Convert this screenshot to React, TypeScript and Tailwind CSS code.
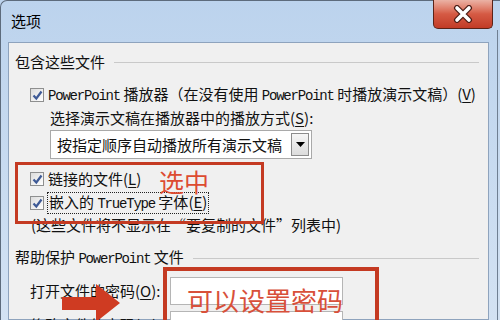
import React from 'react';

const CJK = "font-['Noto_Sans_CJK_SC','Noto_Sans_CJK_JP',sans-serif]";

const Mono: React.FC<{ children: React.ReactNode }> = ({ children }) => (
  <span className="font-['Liberation_Mono',monospace] text-[14px] tracking-[-1.2px]">{children}</span>
);

const Key: React.FC<{ k: string }> = ({ k }) => (
  <span>
    (<span className="underline underline-offset-2">{k}</span>)
  </span>
);

const CheckBox: React.FC = () => (
  <span className="flex h-[14px] w-[14px] shrink-0 items-center justify-center border border-[#8e8f8f] bg-gradient-to-br from-[#dcdcdc] to-white">
    <svg width="11" height="11" viewBox="0 0 11 11">
      <path d="M1.5 5.5 L4.3 8.5 L9.5 1.5" fill="none" stroke="#3e5a96" strokeWidth="2.2" />
    </svg>
  </span>
);

const GroupTitle: React.FC<{ children: React.ReactNode }> = ({ children }) => (
  <div className="flex h-[20px] items-center pl-[6px] pr-[9px]">
    <span className="whitespace-nowrap text-[15px] leading-[20px]">{children}</span>
    <div className="ml-[9px] flex-1 border-t border-[#c9c9c9] border-b-white" />
  </div>
);

export default function App() {
  return (
    <div className={`relative h-[320px] w-[500px] overflow-hidden bg-gradient-to-b from-[#bcd3ed] to-[#d3e2f3] text-[#111] ${CJK}`}>
      {/* window outline */}
      <div className="absolute inset-0 rounded-tl-[7px] border-l border-t border-[#5d6b7c]" />
      <div className="absolute bottom-0 right-[2px] top-[30px] w-px bg-[#6f7f92]" />

      {/* title bar */}
      <div className="flex h-[42px] items-start pl-[11px] pt-[11px]">
        <span className="text-[15px] leading-[20px] text-black">选项</span>
      </div>

      {/* close button */}
      <div className="absolute right-[7px] top-0 flex h-[29px] w-[60px] items-center justify-center rounded-b-[5px] border border-t-0 border-[#5b2318] bg-gradient-to-b from-[#eab2a5] via-[#d55a44] to-[#c23b26]">
        <svg width="22" height="18" viewBox="0 0 22 18">
          <path d="M5 3 L17 15 M17 3 L5 15" stroke="#4a1d16" strokeWidth="6" strokeLinecap="round" />
          <path d="M5 3 L17 15 M17 3 L5 15" stroke="#fff" strokeWidth="3.6" strokeLinecap="round" />
        </svg>
      </div>

      {/* client area */}
      <div className="ml-[8px] mr-[11px] h-[278px] border border-[#8ea3bd] bg-[#f0f0f0] pt-[9px] text-[15px] leading-[20px]">
        <GroupTitle>包含这些文件</GroupTitle>

        <div className="mt-[13px] flex h-[20px] items-center pl-[21px]">
          <CheckBox />
          <span className="ml-[4px] whitespace-nowrap">
            <Mono>PowerPoint</Mono> 播放器（在没有使用 <Mono>PowerPoint</Mono> 时播放演示文稿）<Key k="V" />
          </span>
        </div>

        <div className="mt-[3px] h-[20px] whitespace-nowrap pl-[41px]">
          选择演示文稿在播放器中的播放方式<Key k="S" />:
        </div>

        <div className="ml-[41px] mt-[2px] flex h-[29px] w-[262px] items-center border border-[#a9a9a9] bg-white pl-[6px] pr-[2px]">
          <span className="flex-1 whitespace-nowrap">按指定顺序自动播放所有演示文稿</span>
          <span className="flex h-[23px] w-[18px] items-center justify-center border border-[#8c8c8c] bg-gradient-to-b from-[#f6f6f6] to-[#dcdcdc]">
            <svg width="9" height="5" viewBox="0 0 9 5">
              <path d="M0 0 L9 0 L4.5 5 Z" fill="#000" />
            </svg>
          </span>
        </div>

        <div className="mt-[10px] flex h-[20px] items-center pl-[21px]">
          <CheckBox />
          <span className="ml-[4px] whitespace-nowrap">
            链接的文件<Key k="L" />
          </span>
        </div>

        <div className="mt-[4px] flex h-[20px] items-center pl-[21px]">
          <CheckBox />
          <span className="ml-[3px] whitespace-nowrap border border-dotted border-[#222] px-px leading-[17px]">
            嵌入的 <Mono>TrueType</Mono> 字体<Key k="E" />
          </span>
        </div>

        <div className="mt-[2px] h-[20px] whitespace-nowrap pl-[22px]">
          (这些文件将不显示在“要复制的文件”列表中)
        </div>

        <div className="mt-[13px]">
          <GroupTitle>
            帮助保护 <Mono>PowerPoint</Mono> 文件
          </GroupTitle>
        </div>

        <div className="mt-[9px] flex h-[28px] items-center">
          <span className="w-[161px] whitespace-nowrap pl-[21px]">
            打开文件的密码<Key k="O" />:
          </span>
          <div className="h-[28px] w-[173px] border border-[#b5b5b5] bg-white" />
        </div>

        <div className="mt-[6px] flex h-[28px] items-start">
          <span className="w-[161px] whitespace-nowrap pl-[21px] pt-[4px]">
            修改文件的密码<Key k="M" />:
          </span>
          <div className="h-[28px] w-[173px] border border-[#b5b5b5] bg-white" />
        </div>
      </div>

      {/* annotations */}
      <div className="absolute left-[15px] top-[162px] h-[62px] w-[249px] border-[3px] border-[#c43a22]" />
      <span className="absolute left-[159px] top-[168px] text-[25px] leading-[26px] text-[#dd4b30]">选中</span>

      <div className="absolute left-[163px] top-[267px] h-[70px] w-[216px] border-[4px] border-[#c43a22]" />
      <span className="absolute left-[187px] top-[283px] text-[26px] leading-[34px] text-[#d8503a]">可以设置密码</span>

      <svg className="absolute left-[62px] top-[282px]" width="62" height="40" viewBox="0 0 62 40">
        <path d="M0 15 L34 15 L34 2 L58 21 L34 40 L34 28 L0 28 Z" fill="#cf3b22" />
      </svg>
    </div>
  );
}
